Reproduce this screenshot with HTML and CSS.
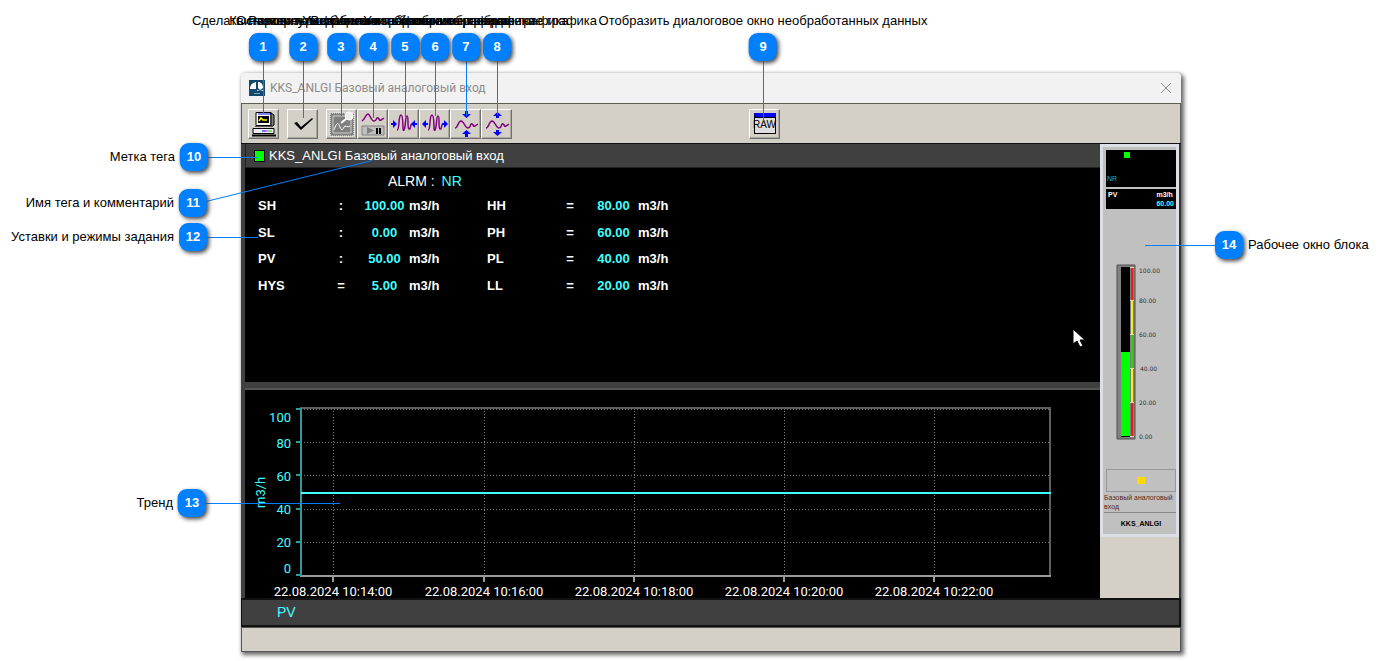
FILE: index.html
```
<!DOCTYPE html>
<html lang="ru">
<head>
<meta charset="utf-8">
<title>KKS_ANLGI Базовый аналоговый вход</title>
<link rel="stylesheet" href="styles.css">
</head>
<body>
<div class="stage">
  <main class="window">
    <header class="titlebar">
      <svg class="logo" width="16" height="16" viewBox="0 0 16 16"><path fill="#12486b" d="M0 0h16v16H0z"/><path fill="#fff" d="M1 9c0-4 2-6 6-7v7zM9 2c3 0 5 2 5 6l-3 2-2-2zM8 10l3 1 3-1v1H8z"/><path stroke="#7fa3b8" d="M5 13.500h6"/></svg>
      <h1>KKS_ANLGI Базовый аналоговый вход</h1>
      <button class="close" aria-label="Закрыть"><svg width="12" height="12" viewBox="0 0 12 12"><path d="m1 1 10 10M11 1 1 11" stroke="#8a8a8a"/></svg></button>
    </header>
    <div class="toolbar">
      <button class="tool" aria-label="Снимок экрана"><svg width="26" height="26" viewBox="0 0 26 26"><path d="M5 1.500h15v13H5z" fill="#fff" stroke="#000"/><path d="M7 3h13" stroke="#00f"/><path d="M7 5h11v7H7z" fill="#000"/><path d="m8 10 2-3 2 2h4" stroke="#ff0" stroke-width="1.500" fill="none"/><path d="M20 2l3 2v10l-3 2z" fill="#808080" stroke="#000"/><path d="M2 17.500h21v5H2z" fill="#eee" stroke="#000"/><path d="M11 20h4" stroke="#00f"/><path d="M15 20h2" stroke="#f0f"/><path d="M17 20h4" stroke="#0c0"/><path d="M1 24.500h24" stroke="#000" stroke-width="2"/><path d="M4 15.500h18" stroke="#555"/></svg></button>
      <button class="tool space" aria-label="Квитировать"><svg width="26" height="26" viewBox="0 0 26 26"><path d="m4 12 3-1 4 5L22 7l1 1-12 11z" fill="#000"/></svg></button>
      <button class="tool space" aria-label="Развернуть график"><svg width="26" height="26" viewBox="0 0 26 26"><path d="M1 2h24v23H1z" fill="#808080" stroke="#fff" stroke-dasharray="1 1"/><path d="M4 5h18v17H4z" fill="#808080" stroke="#d4d0c8"/><path d="M5 19c3-8 4-8 6-3s3 2 4 0 4 1 6-1" stroke="#fff" fill="none"/><path d="m12 12 5-4" stroke="#fff" stroke-width="2"/><circle cx="20" cy="5" r="4" fill="#eee" stroke="#fff"/></svg></button>
      <button class="tool" aria-label="Пауза"><svg width="26" height="26" viewBox="0 0 26 26"><path d="M2 10c3-2 4-7 6-7s3 7 6 7 2-4 4-3 1 3 3 2l3-2" stroke="#800080" stroke-width="1.500" fill="none"/><path d="M2 15h22v9H2z" fill="#c0c0c0" stroke="#808080"/><path d="m7 16 7 3.500L7 23z" fill="#808080"/><path d="M17 17v6M20 17v6" stroke="#000" stroke-width="2"/></svg></button>
      <button class="tool" aria-label="Сжать по времени"><svg width="26" height="26" viewBox="0 0 26 26"><path d="M6 19c3 0 1-15 4-15s1 18 3 15 1-14 3-14 0 12 2 13 1-5 3-5" stroke="#800080" stroke-width="1.500" fill="none"/><path d="M0 12h2V9l4 4-4 4v-3H0zM26 12h-2V9l-4 4 4 4v-3h2z" fill="#00f"/></svg></button>
      <button class="tool" aria-label="Растянуть по времени"><svg width="26" height="26" viewBox="0 0 26 26"><path d="M6 19c3 0 1-15 4-15s1 18 3 15 1-14 3-14 0 12 2 13 1-5 3-5" stroke="#800080" stroke-width="1.500" fill="none"/><path d="M6 12H4V9l-4 4 4 4v-3h2zM20 12h2V9l4 4-4 4v-3h-2z" fill="#00f"/></svg></button>
      <button class="tool" aria-label="Сжать по высоте"><svg width="26" height="26" viewBox="0 0 26 26"><path d="M2 17c3 0 3-7 6-7s4 7 7 7 2-5 4-4 1 3 3 2l3-2" stroke="#800080" stroke-width="1.500" fill="none"/><path d="M12 0h3v3h3l-4.500 4L9 3h3zM12 26h3v-3h3l-4.500-4L9 23h3z" fill="#00f"/></svg></button>
      <button class="tool" aria-label="Растянуть по высоте"><svg width="26" height="26" viewBox="0 0 26 26"><path d="M2 17c3 0 3-7 6-7s4 7 7 7 2-5 4-4 1 3 3 2l3-2" stroke="#800080" stroke-width="1.500" fill="none"/><path d="M12 7h3V5h3l-4.500-4L9 5h3zM12 19h3v2h3l-4.500 4L9 21h3z" fill="#00f"/></svg></button>
      <button class="tool raw" aria-label="Необработанные данные"><span>RAW</span></button>
    </div>
    <div class="content">
      <section class="left">
        <h2 class="tagline"><i class="tagmark"></i>KKS_ANLGI Базовый аналоговый вход</h2>
        <div class="params">
          <p class="alarm">ALRM : <b>NR</b></p>
          <table>
            <colgroup><col class="c-name"><col class="c-op"><col class="c-val"><col class="c-unit"><col class="c-name"><col class="c-op"><col class="c-val"><col class="c-unit"></colgroup>
            <tr><th>SH</th><td class="op">:</td><td class="val">100.00</td><td>m3/h</td><th>HH</th><td class="op">=</td><td class="val">80.00</td><td>m3/h</td></tr>
            <tr><th>SL</th><td class="op">:</td><td class="val">0.00</td><td>m3/h</td><th>PH</th><td class="op">=</td><td class="val">60.00</td><td>m3/h</td></tr>
            <tr><th>PV</th><td class="op">:</td><td class="val">50.00</td><td>m3/h</td><th>PL</th><td class="op">=</td><td class="val">40.00</td><td>m3/h</td></tr>
            <tr><th>HYS</th><td class="op">=</td><td class="val">5.00</td><td>m3/h</td><th>LL</th><td class="op">=</td><td class="val">20.00</td><td>m3/h</td></tr>
          </table>
        </div>
        <div class="trend">
          <svg width="855" height="208" viewBox="0 0 855 208">
            <g class="grid"><path d="M56 52.500h749M56 85.500h749M56 119.500h749M56 152.500h749M56 19.500h749M88.500 18v167M239.500 18v167M389.500 18v167M539.500 18v167M689.500 18v167"/></g>
            <path d="M55 18h750v168" fill="none" stroke="#5e5e5e" stroke-width="2"/>
            <path d="M55 186h751M88 186v6M239 186v6M389 186v6M539 186v6M689 186v6" stroke="#9a9a9a" stroke-width="2"/>
            <path d="M56 18v168M51 19h5M51 52h5M51 85h5M51 119h5M51 152h5M51 185h5" stroke="#2e9c9c" stroke-width="2"/>
            <path d="M56 103h750" stroke="#40ffff" stroke-width="2"/>
            <g class="ylab"><text x="46" y="32">100</text><text x="46" y="58">80</text><text x="46" y="91">60</text><text x="46" y="124">40</text><text x="46" y="157">20</text><text x="46" y="183">0</text></g>
            <text class="unit" transform="translate(20 118) rotate(-90)">m3/h</text>
            <g class="xlab"><text x="88" y="206">22.08.2024 10:14:00</text><text x="239" y="206">22.08.2024 10:16:00</text><text x="389" y="206">22.08.2024 10:18:00</text><text x="539" y="206">22.08.2024 10:20:00</text><text x="689" y="206">22.08.2024 10:22:00</text></g>
          </svg>
        </div>
      </section>
      <aside class="side">
        <div class="faceplate">
          <div class="status"><i></i><span>NR</span></div>
          <div class="reading"><span>PV</span><span>m3/h</span><b>60.00</b></div>
          <svg class="gauge" width="70" height="180" viewBox="0 0 70 180">
            <path d="M11 2h18v174H11z" fill="#808080" stroke="#505050"/>
            <path d="M15 4h9v170h-9z" fill="#000"/><path d="M15 89h9v84h-9z" fill="#0f0"/>
            <path d="M26 4v33M26 139v34" stroke="#f01810" stroke-width="2"/><path d="M26 37v34M26 105v34" stroke="#f0f020" stroke-width="2"/><path d="M26 71v34" stroke="#38c818" stroke-width="2"/>
            <path d="M24 4.500h4M24 37.500h4M24 71.500h4M24 105.500h4M24 139.500h4M24 173.500h4" stroke="#ead9b0"/>
            <text x="33" y="10">100.00</text><text x="33" y="40">80.00</text><text x="33" y="74">60.00</text><text x="34" y="108">40.00</text><text x="33" y="142">20.00</text><text x="33" y="176">0.00</text>
          </svg>
          <button class="mark" aria-label="Метка"><i></i></button>
          <p class="comment">Базовый аналоговый вход</p>
          <p class="name">KKS_ANLGI</p>
        </div>
      </aside>
    </div>
    <div class="legend">PV</div>
    <footer class="statusbar"></footer>
  </main>

  <svg class="leaders" width="1383" height="661" viewBox="0 0 1383 661">
    <path d="M263.500 60v53M303.500 60v58M341.500 60v56M373.500 60v58M405.500 60v58M435.500 60v56M466.500 60v56M497.500 60v55M763.500 60v61M207 157.500h51M206 201.500 372 160.500M206 237.500h52M205 503.500h135M1145 245.500h71"/>
  </svg>
  <svg class="leaders pointer" width="14" height="20" viewBox="0 0 14 20"><path class="arrow" d="M1 1v15l4-3 3 6 3-1-3-6h5z"/></svg>
  <div class="callout top c1"><span>Сделать снимок экрана</span><b>1</b></div>
  <div class="callout top c2"><span>Квитировать сообщение</span><b>2</b></div>
  <div class="callout top c3"><span>Развернуть фрагмент графика</span><b>3</b></div>
  <div class="callout top c4"><span>Остановить/Возобновить обновление тренда</span><b>4</b></div>
  <div class="callout top c5"><span>Уменьшить изображение графика</span><b>5</b></div>
  <div class="callout top c6"><span>Увеличить изображение графика</span><b>6</b></div>
  <div class="callout top c7"><span>Уменьшить изображение графика</span><b>7</b></div>
  <div class="callout top c8"><span>Увеличить изображение графика</span><b>8</b></div>
  <div class="callout top c9"><span>Отобразить диалоговое окно необработанных данных</span><b>9</b></div>
  <div class="callout west c10"><span>Метка тега</span><b>10</b></div>
  <div class="callout west c11"><span>Имя тега и комментарий</span><b>11</b></div>
  <div class="callout west c12"><span>Уставки и режимы задания</span><b>12</b></div>
  <div class="callout west c13"><span>Тренд</span><b>13</b></div>
  <div class="callout east c14"><b>14</b><span>Рабочее окно блока</span></div>
</div>
</body>
</html>
```
FILE: styles.css
```
* { box-sizing: border-box; }
body { margin: 0; background: #fff; color: #000; font: 13px/16px "Liberation Sans", Arial, sans-serif; }
h1, h2, p { margin: 0; font-weight: normal; }
button { padding: 0; }
.stage { position: relative; padding: 73px 202px 8px 241px; }

.window { background: #d4d0c8; box-shadow: 2px 2px 4px 1px #666; border-radius: 4px 4px 0 0; }
.titlebar { display: flex; align-items: center; gap: 5px; height: 30px; padding: 0 9px 0 8px; background: #f2f2f2; border-radius: 4px 4px 0 0; }
.titlebar h1 { flex: 1; font: 12px/16px Roboto, "Open Sans", sans-serif; color: #8c8c8c; }
.close { display: flex; border: 0; background: none; }
.toolbar { display: flex; align-items: center; height: 40px; padding: 0 6px; border: solid #5f5f58; border-width: 1px 1px 0 1px; }
.tool { display: flex; align-items: center; justify-content: center; width: 31px; height: 30px; background: #d4d0c8; border: 1px solid; border-color: #fff #707070 #707070 #fff; box-shadow: inset -1px -1px #aaa69e; }
.tool.space { margin-left: 8px; }
.raw { margin-left: 237px; }
.raw span { width: 22px; height: 21px; border: 1px solid #000; border-top: 4px solid #00f; box-shadow: inset 0 1px #000; background: #ddd; font: 10px/16px "Liberation Sans", Arial, sans-serif; display: flex; justify-content: center; color: #000; }

.content { display: flex; border-top: 1px solid #111; }
.left { flex: 1; min-width: 0; background: #404040; padding-left: 4px; }
.tagline { display: flex; align-items: center; gap: 4px; height: 23px; padding-left: 8px; color: #fff; font-size: 13px; line-height: 16px; border-left: 1px solid #222; }
.tagmark { width: 11px; height: 12px; background: #0f0; border: 1px solid #000; }
.params { height: 215px; background: #000; color: #fff; padding: 5px 13px; border-top: 1px solid #222; margin-bottom: 6px; }
.alarm { padding-left: 130px; font-size: 14px; line-height: 16px; margin-bottom: 4px; }
.alarm b { font-weight: normal; color: #40ffff; margin-left: 3px; }
.params table { table-layout: fixed; width: 458px; border-collapse: collapse; font-weight: bold; }
.params th, .params td { padding: 0; height: 27px; text-align: left; }
.params tr:nth-child(odd) :is(th, td) { height: 26px; }
.c-name { width: 70px; } .c-op { width: 26px; } .c-val { width: 55px; } .c-unit { width: 78px; }
.params td.op { text-align: center; }
.params td.val { text-align: center; color: #40ffff; padding-left: 6px; }
.trend { background: #000; border-top: 2px solid #555; height: 210px; overflow: hidden; }
.trend svg { display: block; }
.trend text { font: 13px Roboto, sans-serif; }
.grid { stroke: #808080; stroke-dasharray: 1 2; }
.ylab, .unit { fill: #40ffff; }
.ylab { text-anchor: end; }
.xlab { fill: #fff; text-anchor: middle; }

.side { width: 81px; border-right: 2px solid #333; background: #d4d0c8; }
.faceplate { height: 393px; background: #c0c0c0; border: 3px solid #dce0e6; padding: 3px 0 0 3px; display: flex; flex-direction: column; font: 7px/9px "Liberation Sans", Arial, sans-serif; }
.status { height: 37px; background: #000; color: #20b8b8; display: flex; flex-direction: column; justify-content: space-between; padding: 2px 1px 4px; }
.status i { width: 6px; height: 6px; margin-left: 17px; background: #0f0; }
.reading { display: grid; grid-template-columns: 1fr auto; height: 20px; margin-top: 2px; padding: 1px 2px; background: #000; color: #fff; font-weight: bold; }
.reading b { grid-column: 2; color: #40ffff; text-align: right; }
.gauge { display: block; margin-top: 54px; }
.gauge text { font: 6px "DejaVu Sans", sans-serif; fill: #333; }
.mark { display: flex; align-items: center; justify-content: center; height: 23px; margin-top: 26px; background: #c0c0c0; border: 1px solid #999; }
.mark i { width: 8px; height: 7px; background: #ffd800; }
.comment { color: #5a2a20; border-bottom: 1px solid #888; padding: 1px 0; margin-left: -2px; }
.name { font-weight: bold; text-align: center; padding-top: 6px; }

.legend { height: 29px; background: #404040; border: 2px solid #111; border-width: 2px 2px 2px 1px; padding: 4px 35px; color: #40ffff; font-size: 14px; line-height: 17px; }
.statusbar { height: 25px; border: 1px solid #555; }

.leaders { position: absolute; left: 0; top: 0; pointer-events: none; }
.leaders path { stroke: #0080ff; fill: none; }
.pointer { left: 1072px; top: 328px; }
.leaders .arrow { fill: #fff; stroke: #000; }
.callout { position: absolute; display: flex; align-items: center; white-space: nowrap; }
.callout b { display: flex; align-items: center; justify-content: center; width: 28px; height: 28px; border-radius: 9px; background: #0080ff; color: #fff; box-shadow: 2px 2px 4px #444; }
.top { top: 13px; flex-direction: column; gap: 4px; transform: translateX(-50%); }
.west { gap: 5px; transform: translate(-100%, -50%); }
.east { gap: 5px; transform: translateY(-50%); }
.c1 { left: 263px; } .c2 { left: 303px; } .c3 { left: 341px; } .c4 { left: 373px; }
.c5 { left: 405px; } .c6 { left: 435px; } .c7 { left: 466px; } .c8 { left: 497px; } .c9 { left: 763px; }
.c10 { left: 208px; top: 157px; }
.c11 { left: 207px; top: 203px; }
.c12 { left: 207px; top: 237px; }
.c13 { left: 206px; top: 503px; }
.c14 { left: 1215px; top: 245px; }
```
